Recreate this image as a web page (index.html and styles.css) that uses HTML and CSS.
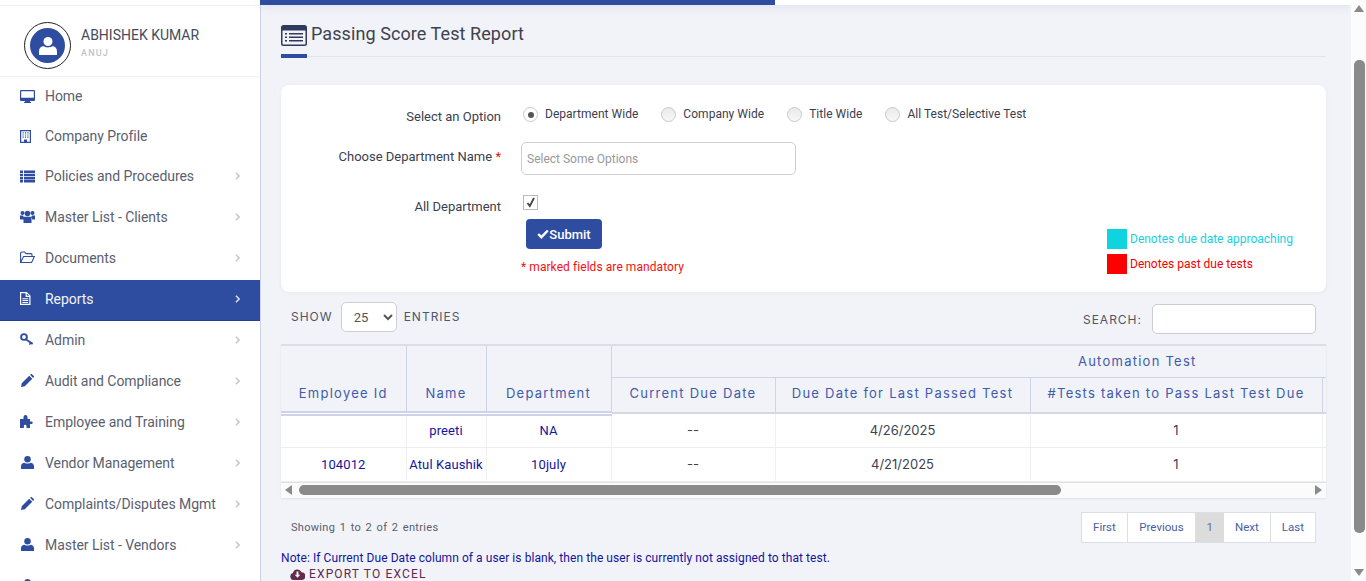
FILE: index.html
```html
<!DOCTYPE html>
<html lang="en">

    <head>
        <meta charset="UTF-8">
        <meta name="viewport" content="width=device-width, initial-scale=1.0">
        <title>Passing Score Test Report</title>
        <link rel="stylesheet" href="styles.css">
    </head>

    <body>
        <svg class="icon-defs" width="0" height="0">
            <defs>
                <symbol id="i-chev" viewBox="0 0 6 10"><path d="M1 1l4 4-4 4" fill="none" stroke="currentColor" stroke-width="2"/></symbol>
                <symbol id="i-user" viewBox="0 0 12 12"><circle cx="6" cy="3" r="3"/><path d="M0 12V9.500C0 7.500 1.500 6.200 3.200 6.200c.8.500 1.800.8 2.800.8s2-.3 2.800-.8C10.500 6.200 12 7.500 12 9.500V12z"/></symbol>
                <symbol id="i-pencil" viewBox="0 0 12 12"><path d="M0 12l.7-3.500L7.600 1.600l2.800 2.800-6.900 6.900zM8.400.8l.6-.6c.3-.3.800-.3 1.100 0l1.700 1.700c.3.300.3.800 0 1.100l-.6.600z"/></symbol>
            </defs>
        </svg>

        <aside class="sidebar">
            <div class="profile">
                <div class="avatar">
                    <div class="avatar-disc">
                        <svg width="18" height="18"><use href="#i-user"/></svg>
                    </div>
                </div>
                <div>
                    <div class="profile-name">ABHISHEK KUMAR</div>
                    <div class="profile-sub">ANUJ</div>
                </div>
            </div>
            <nav class="menu">
                <a class="menu-item first">
                    <svg class="menu-icon" viewBox="0 0 15 13"><path fill-rule="evenodd" d="M1 0h13a1 1 0 011 1v9a1 1 0 01-1 1H10v1h1v1H4v-1h1v-1H1a1 1 0 01-1-1V1a1 1 0 011-1zM1.200 1.200v6.600h12.600V1.200z"/></svg>
                    <span>Home</span>
                </a>
                <a class="menu-item first">
                    <svg class="menu-icon" viewBox="0 0 15 13"><path fill-rule="evenodd" d="M0 0h11v13H0zM1.200 1.200v10.600h2.800V9.500h3v2.300h2.800V1.200zM2.500 2.200h1.200v1.200H2.500zM4.900 2.200h1.200v1.200H4.900zM7.300 2.200h1.200v1.200H7.300zM2.500 4.400h1.200v1.200H2.500zM4.900 4.400h1.200v1.200H4.900zM7.300 4.400h1.200v1.200H7.300zM2.500 6.600h1.200v1.200H2.500zM4.900 6.600h1.200v1.200H4.900zM7.300 6.600h1.200v1.200H7.300z"/></svg>
                    <span>Company Profile</span>
                </a>
                <a class="menu-item first">
                    <svg class="menu-icon" viewBox="0 0 15 12"><path d="M0 0h3v2.500H0zM4 0h11v2.500H4zM0 3.200h3v2.500H0zM4 3.200h11v2.500H4zM0 6.400h3v2.500H0zM4 6.400h11v2.500H4zM0 9.500h3V12H0zM4 9.500h11V12H4z"/></svg>
                    <span>Policies and Procedures</span>
                    <svg class="chev"><use href="#i-chev"/></svg>
                </a>
                <a class="menu-item">
                    <svg class="menu-icon" viewBox="0 0 15 13"><circle cx="2.500" cy="3" r="2"/><circle cx="12.500" cy="3" r="2"/><circle cx="7.500" cy="3.500" r="2.800"/><path d="M0 5.500h3l1 2v2H0zM15 5.500h-3l-1 2v2h4zM4.200 6.800h6.600l.7 1.500V13h-8V8.300z"/></svg>
                    <span>Master List - Clients</span>
                    <svg class="chev"><use href="#i-chev"/></svg>
                </a>
                <a class="menu-item">
                    <svg class="menu-icon" viewBox="0 0 15 12"><path d="M.6 11V1.500a1 1 0 011-1h3l1.400 1.600h5a1 1 0 011 1V5M.6 11l3-6h10.800l-2.800 6z" fill="none" stroke="currentColor" stroke-width="1.100"/></svg>
                    <span>Documents</span>
                    <svg class="chev"><use href="#i-chev"/></svg>
                </a>
                <a class="menu-item active">
                    <svg class="menu-icon" viewBox="0 0 15 13"><path fill-rule="evenodd" d="M0 0h6.800L10.500 3.700V13H0zM1.200 1.200v10.600h8.100V5H5.600V1.200zM6.800 1.500V3.800h2.300zM2.400 6.200h5.800v1H2.400zM2.400 8.100h5.800v1H2.400zM2.400 10h5.800v1H2.400z"/></svg>
                    <span>Reports</span>
                    <svg class="chev"><use href="#i-chev"/></svg>
                </a>
                <a class="menu-item">
                    <svg class="menu-icon" viewBox="0 0 15 13"><circle cx="4" cy="4" r="2.900" fill="none" stroke="currentColor" stroke-width="1.900"/><path d="M6 5.500l7.200 4.600-1 1.600-1.300-.8-.8 1.200-1.200-.8.700-1.200L5 6.700z"/></svg>
                    <span>Admin</span>
                    <svg class="chev"><use href="#i-chev"/></svg>
                </a>
                <a class="menu-item">
                    <svg class="menu-icon" viewBox="0 0 13 13"><use href="#i-pencil"/></svg>
                    <span>Audit and Compliance</span>
                    <svg class="chev"><use href="#i-chev"/></svg>
                </a>
                <a class="menu-item">
                    <svg class="menu-icon" viewBox="0 0 15 13"><path d="M0 4h3.500V2a2 2 0 014 0v2H10v2.500h1.500a1.200 1.200 0 010 2.400H10V13H6.500v-2a1.300 1.300 0 00-2.600 0v2H0z"/></svg>
                    <span>Employee and Training</span>
                    <svg class="chev"><use href="#i-chev"/></svg>
                </a>
                <a class="menu-item">
                    <svg class="menu-icon" viewBox="0 0 14 13"><use href="#i-user"/></svg>
                    <span>Vendor Management</span>
                    <svg class="chev"><use href="#i-chev"/></svg>
                </a>
                <a class="menu-item">
                    <svg class="menu-icon" viewBox="0 0 13 13"><use href="#i-pencil"/></svg>
                    <span>Complaints/Disputes Mgmt</span>
                    <svg class="chev"><use href="#i-chev"/></svg>
                </a>
                <a class="menu-item">
                    <svg class="menu-icon" viewBox="0 0 14 13"><use href="#i-user"/></svg>
                    <span>Master List - Vendors</span>
                    <svg class="chev"><use href="#i-chev"/></svg>
                </a>
                <a class="menu-item">
                    <svg class="menu-icon" viewBox="0 0 14 13"><use href="#i-user"/></svg>
                </a>
            </nav>
        </aside>

        <main class="content">
            <div class="progress"><div class="progress-fill"></div></div>

            <div class="page-head">
                <svg class="head-icon" width="26" height="21" viewBox="0 0 26 21"><path fill-rule="evenodd" fill="#2f3b5c" d="M2.500 0h21A2.500 2.500 0 0126 2.500v16a2.500 2.500 0 01-2.500 2.500h-21A2.500 2.500 0 010 18.500v-16A2.500 2.500 0 012.500 0zM1.500 5.500v13c0 .6.400 1 1 1h21c.6 0 1-.4 1-1v-13zM4 8h2v1.500H4zM8 8h14v1.500H8zM4 11.500h2V13H4zM8 11.500h14V13H8zM4 15h2v1.500H4zM8 15h14v1.500H8z"/></svg>
                <h1>Passing Score Test Report</h1>
            </div>

            <section class="card">
                <div class="form-row row-option">
                    <label class="form-label">Select an Option</label>
                    <div class="radios">
                        <span class="radio checked"></span><span class="radio-text">Department Wide</span>
                        <span class="radio"></span><span class="radio-text">Company Wide</span>
                        <span class="radio"></span><span class="radio-text">Title Wide</span>
                        <span class="radio"></span><span class="radio-text">All Test/Selective Test</span>
                    </div>
                </div>
                <div class="form-row row-dept">
                    <label class="form-label">Choose Department Name <em>*</em></label>
                    <div class="fake-select">Select Some Options</div>
                </div>
                <div class="form-row row-all">
                    <label class="form-label">All Department</label>
                    <span class="checkbox">
                        <svg width="10" height="11" viewBox="0 0 10 11"><path d="M1.500 6l2.300 3L8 1" fill="none" stroke="#444" stroke-width="1.800"/></svg>
                    </span>
                </div>
                <button class="btn-submit" type="button">
                    <svg width="12" height="10" viewBox="0 0 12 10"><path d="M1.200 5l3.200 3.200L10.800 1.500" fill="none" stroke="#fff" stroke-width="2.400"/></svg>Submit
                </button>
                <p class="mandatory">* marked fields are mandatory</p>
                <div class="legend">
                    <div class="legend-row due"><i></i>Denotes due date approaching</div>
                    <div class="legend-row past"><i></i>Denotes past due tests</div>
                </div>
            </section>

            <div class="table-tools">
                <div class="tool-left">
                    <span>SHOW</span>
                    <select class="entries"><option>25</option></select>
                    <span>ENTRIES</span>
                </div>
                <div class="tool-right">
                    <span>SEARCH:</span>
                    <input class="search" type="text">
                </div>
            </div>

            <div class="table-wrap">
                <table class="report">
                    <colgroup>
                        <col class="c1"><col class="c2"><col class="c3"><col class="c4"><col class="c5"><col class="c6"><col class="c7">
                    </colgroup>
                    <thead>
                        <tr class="head-top">
                            <th rowspan="2" class="fixed-head">Employee Id</th>
                            <th rowspan="2" class="fixed-head">Name</th>
                            <th rowspan="2" class="fixed-head">Department</th>
                            <th colspan="4" class="group-head"><span>Automation Test</span></th>
                        </tr>
                        <tr class="head-sub">
                            <th>Current Due Date</th>
                            <th>Due Date for Last Passed Test</th>
                            <th>#Tests taken to Pass Last Test Due</th>
                            <th></th>
                        </tr>
                    </thead>
                    <tbody>
                        <tr>
                            <td></td>
                            <td class="link">preeti</td>
                            <td class="link">NA</td>
                            <td>--</td>
                            <td>4/26/2025</td>
                            <td>1</td>
                            <td></td>
                        </tr>
                        <tr>
                            <td class="link">104012</td>
                            <td class="link">Atul Kaushik</td>
                            <td class="link">10july</td>
                            <td>--</td>
                            <td>4/21/2025</td>
                            <td>1</td>
                            <td></td>
                        </tr>
                    </tbody>
                </table>
                <div class="hscroll">
                    <span class="arrow-left"></span>
                    <div class="hscroll-track"><div class="hscroll-thumb"></div></div>
                    <span class="arrow-right"></span>
                </div>
            </div>

            <div class="table-foot">
                <span class="showing">Showing 1 to 2 of 2 entries</span>
                <div class="pager">
                    <a>First</a><a>Previous</a><a class="current">1</a><a>Next</a><a>Last</a>
                </div>
            </div>

            <p class="note">Note: If Current Due Date column of a user is blank, then the user is currently not assigned to that test.</p>
            <a class="export">
                <svg width="15" height="12" viewBox="0 0 15 12"><path fill-rule="evenodd" d="M4 12a3.500 3.500 0 01-1-6.900A4.500 4.500 0 0111.500 4.200 3.900 3.900 0 0111.500 12zM6.500 3.500v3.300H4.700l2.800 3 2.800-3H8.500V3.500z"/></svg>
                EXPORT TO EXCEL
            </a>
        </main>

        <div class="page-scroll">
            <span class="up"></span>
            <div class="page-thumb"></div>
            <span class="down"></span>
        </div>
    </body>

</html>
```
FILE: styles.css
```css
* {
    box-sizing: border-box;
}

html,
body {
    height: 100%;
}

body {
    margin: 0;
    display: flex;
    height: 100vh;
    overflow: hidden;
    font-family: Roboto, "Liberation Sans", sans-serif;
    background-color: #f1f3f8;
    color: #3f4254;
}

.icon-defs {
    position: absolute;
}

/* sidebar */
.sidebar {
    width: 261px;
    flex: none;
    background-color: #fff;
    border-right: 1px solid #ced3e8;
    overflow: hidden;
}

.profile {
    margin-top: 5px;
    height: 72px;
    padding: 16px 0 0 24px;
    display: flex;
    gap: 10px;
    border-top: 1px solid #f0f1f4;
    border-bottom: 1px solid #f0f1f4;
}

.avatar {
    width: 47px;
    height: 47px;
    border: 1px solid #222;
    border-radius: 50%;
    padding: 5px;
}

.avatar-disc {
    width: 35px;
    height: 35px;
    border-radius: 50%;
    background-color: #2e4da0;
    color: #fff;
    display: flex;
    align-items: center;
    justify-content: center;
    fill: #fff;
}

.profile-name {
    margin-top: 5px;
    font-size: 14px;
    line-height: 16px;
    color: #464c5c;
}

.profile-sub {
    margin-top: 4px;
    font-size: 9px;
    line-height: 12px;
    letter-spacing: 1.2px;
    font-weight: 500;
    color: #c2c4cb;
}

.menu {
    margin-top: 1px;
}

.menu-item {
    display: flex;
    align-items: center;
    height: 41px;
    padding: 0 20px 4px 20px;
    font-size: 14px;
    letter-spacing: -0.05px;
    color: #5a6070;
}

.menu-item.first {
    height: 40px;
}

.menu-item span {
    flex: 1;
}

.menu-icon {
    width: 15px;
    height: 13px;
    margin-right: 10px;
    flex: none;
    fill: #2e4da0;
    color: #2e4da0;
}

.chev {
    width: 5px;
    height: 8px;
    color: #c6c8ce;
}

.menu-item.active {
    padding-bottom: 3px;
    background-color: #2e4da0;
    color: #f2f4fa;
    border-bottom: 1px solid #243f8a;
}

.active .menu-icon {
    fill: #fff;
}

.active .chev {
    color: #d8dded;
}

/* main column */
.content {
    flex: 1;
    min-width: 0;
    padding: 0 25px 0 20px;
}

.progress {
    height: 5px;
    margin: 0 -25px 0 -21px;
    background-color: #fff;
    box-shadow: 0 2px 8px rgba(46, 77, 160, 0.12);
}

.progress-fill {
    width: 515px;
    height: 100%;
    background-color: #2e4da0;
}

.page-head {
    height: 52px;
    padding-top: 16px;
    display: flex;
    align-items: flex-start;
    gap: 4px;
    border-bottom: 1px solid #e2e4ea;
    position: relative;
}

.page-head::after {
    content: "";
    position: absolute;
    left: 0;
    bottom: -2px;
    width: 26px;
    height: 4px;
    background-color: #2e4da0;
}

.head-icon {
    margin-top: 4px;
}

h1 {
    margin: 0;
    font-size: 18px;
    line-height: 25px;
    font-weight: 400;
    letter-spacing: 0.08px;
    color: #3d424f;
}

.card {
    position: relative;
    height: 207px;
    margin-top: 28px;
    background-color: #fff;
    border-radius: 8px;
    box-shadow: 0 1px 4px rgba(60, 70, 110, 0.06);
    padding-top: 20px;
}

.form-row {
    display: flex;
    align-items: flex-start;
}

.form-label {
    width: 220px;
    flex: none;
    text-align: right;
    font-size: 13px;
    line-height: 16px;
    color: #3a4050;
}

.form-label em {
    color: #f01010;
    font-style: normal;
}

.row-option .form-label {
    margin-top: 4px;
}

.radios {
    display: flex;
    align-items: center;
    margin-left: 22px;
    font-size: 12px;
    line-height: 16px;
    color: #3a4050;
}

.radio {
    width: 15px;
    height: 15px;
    margin-top: 2px;
    border-radius: 50%;
    border: 1px solid #c9c9c9;
    background: linear-gradient(#e9e9e9, #f8f8f8);
    position: relative;
}

.radio.checked {
    background: #fff;
}

.radio.checked::after {
    content: "";
    position: absolute;
    left: 3.500px;
    top: 3.500px;
    width: 6px;
    height: 6px;
    border-radius: 50%;
    background-color: #555;
}

.radio-text {
    margin: 0 23px 0 7px;
    letter-spacing: 0.03px;
}

.row-dept {
    margin-top: 17px;
}

.row-dept .form-label {
    margin-top: 7px;
}

.fake-select {
    width: 275px;
    height: 33px;
    margin-left: 20px;
    padding-left: 5px;
    border: 1px solid #cfcfcf;
    border-radius: 5px;
    font-size: 12px;
    line-height: 32px;
    color: #999;
}

.row-all {
    margin-top: 20px;
}

.row-all .form-label {
    margin-top: 4px;
}

.checkbox {
    width: 15px;
    height: 15px;
    margin: 0 0 0 22px;
    border: 1px solid #bbb;
    display: flex;
    align-items: center;
    justify-content: center;
}

.btn-submit {
    display: flex;
    align-items: center;
    justify-content: center;
    width: 76px;
    height: 30px;
    margin: 4px 0 0 245px;
    border: none;
    border-radius: 4px;
    background-color: #2e4da0;
    color: #fff;
    font-family: Roboto, sans-serif;
    font-size: 13px;
    font-weight: 500;
}

.mandatory {
    margin: 10px 0 0 240px;
    font-size: 12px;
    line-height: 16px;
    letter-spacing: 0.07px;
    color: #f60f0f;
}

.legend {
    position: absolute;
    left: 826px;
    top: 144px;
    display: flex;
    flex-direction: column;
    gap: 5px;
    font-size: 12px;
}

.legend-row {
    display: flex;
    align-items: center;
    gap: 3px;
    height: 20px;
}

.legend-row i {
    width: 20px;
    height: 20px;
}

.due {
    color: #14d2e0;
}

.due i {
    background-color: #0fd3df;
}

.past {
    color: #f80000;
}

.past i {
    background-color: #ff0000;
}

/* table */
.table-tools {
    display: flex;
    justify-content: space-between;
    height: 52px;
    padding: 10px 10px 0;
    font-family: "Inter", sans-serif;
    font-size: 12px;
    letter-spacing: 1px;
    color: #4f5666;
}

.tool-left,
.tool-right {
    display: flex;
    gap: 7px;
    align-items: center;
    height: 30px;
}

.tool-left span {
    margin-top: -2px;
}

.tool-left span:first-child {
    margin-right: 1px;
}

.tool-right {
    margin-top: 2px;
    gap: 10px;
}

.entries {
    width: 56px;
    height: 30px;
    padding-left: 8px;
    border: 1px solid #ced0d6;
    border-radius: 5px;
    background-color: #fff;
    font-family: Roboto, sans-serif;
    font-size: 13px;
    color: #555;
}

.search {
    width: 164px;
    height: 30px;
    border: 1px solid #c9ccd2;
    border-radius: 5px;
    background-color: #fff;
}

.table-wrap {
    overflow: hidden;
    border-top: 2px solid #dcdee6;
    box-shadow: 0 1px 2px rgba(0, 0, 0, 0.08);
}

.report {
    table-layout: fixed;
    width: 1382px;
    border-collapse: collapse;
}

.c1 { width: 125px; }
.c2 { width: 80px; }
.c3 { width: 125px; }
.c4 { width: 164px; }
.c5 { width: 255px; }
.c6 { width: 292px; }
.c7 { width: 341px; }

.report th {
    padding: 0;
    font-family: "Inter", sans-serif;
    font-weight: 400;
    font-size: 13px;
    letter-spacing: 1.25px;
    color: #3f5bab;
    white-space: nowrap;
    background-color: #f1f3f8;
}

.report th.fixed-head {
    vertical-align: bottom;
    padding-bottom: 10px;
    border-right: 1px solid #ced3e8;
    border-bottom: 5px double #ced3e8;
    height: 67px;
}

.group-head {
    height: 31px;
    border-bottom: 1px solid #ced3e8;
}

.report .head-sub th {
    height: 35px;
    padding-bottom: 3px;
    border-right: 1px solid #ced3e8;
    border-bottom: 2px solid #d4d7e4;
}

.report td {
    height: 34px;
    padding: 0;
    text-align: center;
    background-color: #fff;
    border-right: 1px solid #f0f1f4;
    border-bottom: 1px solid #eceef2;
    font-family: "Inter", sans-serif;
    font-size: 13px;
    color: #3d4250;
}

.report td.link {
    font-family: Roboto, sans-serif;
    letter-spacing: 0.1px;
    color: #14149e;
}

.report tbody tr:first-child td.link {
    padding-bottom: 2px;
}

.hscroll {
    height: 16px;
    display: flex;
    align-items: center;
    padding: 0 4px 0 4px;
    background-color: #fbfbfb;
    border-top: 1px solid #dfe1e6;
}

.hscroll-track {
    flex: 1;
    padding: 0 7px;
}

.hscroll-thumb {
    width: 762px;
    height: 10px;
    border-radius: 5px;
    background-color: #8a8a8a;
}

.arrow-left,
.arrow-right {
    width: 0;
    height: 0;
    border-top: 5px solid transparent;
    border-bottom: 5px solid transparent;
}

.arrow-left {
    border-right: 7px solid #8a8a8a;
}

.arrow-right {
    border-left: 7px solid #8a8a8a;
}

.table-foot {
    display: flex;
    justify-content: space-between;
    align-items: flex-start;
    height: 52px;
    padding: 14px 10px 0;
}

.showing {
    margin-top: 9px;
    font-size: 11px;
    letter-spacing: 0.3px;
    word-spacing: 1.5px;
    color: #5a5f6c;
}

.pager {
    display: flex;
    background-color: #fff;
    border: 1px solid #dcdee6;
    height: 31px;
    font-size: 11.500px;
    line-height: 29px;
    color: #46609f;
}

.pager a {
    padding: 0 11px;
    border-right: 1px solid #dcdee6;
}

.pager a:first-child {
    padding: 0 11.500px;
}

.pager a:last-child {
    border-right: none;
}

.pager .current {
    background-color: #dcdcdc;
    border-right: none;
    color: #66708c;
}

.note {
    margin: 0;
    font-size: 12px;
    line-height: 16px;
    letter-spacing: 0.07px;
    color: #14149e;
}

.export {
    display: flex;
    align-items: center;
    gap: 4px;
    margin: 1px 0 0 9px;
    font-family: Roboto, sans-serif;
    font-size: 12px;
    line-height: 14px;
    letter-spacing: 1.15px;
    color: #63294f;
    fill: #63294f;
}

/* page scrollbar */
.page-scroll {
    width: 15px;
    flex: none;
    background-color: #fcfcfc;
    position: relative;
}

.page-thumb {
    position: absolute;
    left: 3px;
    right: 1px;
    top: 60px;
    height: 473px;
    border-radius: 5px;
    background-color: #8a8a8a;
}

.down {
    position: absolute;
    left: 3px;
    bottom: 5px;
    border-left: 5px solid transparent;
    border-right: 5px solid transparent;
    border-top: 7px solid #8a8a8a;
}

.up {
    position: absolute;
    left: 3px;
    top: 5px;
    border-left: 5px solid transparent;
    border-right: 5px solid transparent;
    border-bottom: 7px solid #8a8a8a;
}
```
